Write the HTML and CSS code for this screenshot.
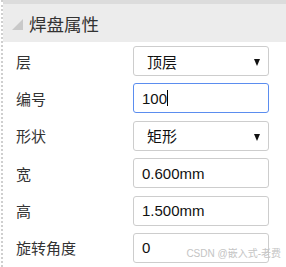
FILE: index.html
```html
<!DOCTYPE html>
<html lang="zh-CN">
<head>
  <meta charset="UTF-8" />
  <meta name="viewport" content="width=device-width, initial-scale=1.0" />
  <title>焊盘属性</title>
  <link rel="stylesheet" href="styles.css">
</head>
<body>
  <div class="panel">
    <div class="topbar"></div>
    <div class="header">
      <svg class="collapse" width="11" height="11" viewBox="0 0 11 11">
        <polygon points="0,11 11,11 11,0" fill="#c9c9c9" />
      </svg>
      <span class="title">焊盘属性</span>
    </div>

    <div class="props">
      <div class="row">
        <span class="label">层</span>
        <div class="field select">顶层<span class="arrow"></span></div>
      </div>
      <div class="row">
        <span class="label">编号</span>
        <div class="field focused">100<span class="caret"></span></div>
      </div>
      <div class="row">
        <span class="label">形状</span>
        <div class="field select">矩形<span class="arrow"></span></div>
      </div>
      <div class="row">
        <span class="label">宽</span>
        <div class="field">0.600mm</div>
      </div>
      <div class="row">
        <span class="label">高</span>
        <div class="field">1.500mm</div>
      </div>
      <div class="row">
        <span class="label">旋转角度</span>
        <div class="field">0</div>
      </div>
    </div>

    <div class="watermark">CSDN @嵌入式-老费</div>
  </div>
</body>
</html>
```

FILE: styles.css
```css
* {
  margin: 0;
  padding: 0;
  box-sizing: border-box;
}

body {
  font-family: "Liberation Sans", "Noto Sans CJK SC", sans-serif;
  background: #fff;
  color: #222;
}

.panel {
  position: relative;
  min-height: 100vh;
  margin-left: 1px;
  border-left: 2px dotted #cfcfcf;
}

.topbar {
  height: 4px;
  background: #dcdcdc;
}

.header {
  height: 38px;
  background: #ececec;
  display: flex;
  align-items: center;
  gap: 6px;
  padding-left: 9px;
}

.collapse {
  margin-top: 2px;
}

.title {
  font-size: 17.5px;
  color: #333;
}

.props {
  display: flex;
  flex-direction: column;
  gap: 7.4px;
  padding-top: 4px;
}

.row {
  display: flex;
  align-items: center;
  height: 30px;
}

.label {
  width: 130px;
  padding-left: 13px;
  font-size: 15px;
  color: #333;
}

.field {
  position: relative;
  width: 136px;
  height: 30px;
  border: 1px solid #cdcdcd;
  border-radius: 3px;
  padding-left: 8px;
  display: flex;
  align-items: center;
  font-size: 15px;
  color: #111;
}

.field.select {
  padding-left: 13px;
}

.field.focused {
  border-color: #5b8def;
}

.arrow {
  position: absolute;
  right: 8px;
  top: 12px;
  border-left: 3.5px solid transparent;
  border-right: 3.5px solid transparent;
  border-top: 7px solid #111;
}

.caret {
  display: inline-block;
  width: 1px;
  height: 16px;
  background: #000;
}

.watermark {
  position: absolute;
  right: 5px;
  bottom: 7px;
  font-size: 10px;
  color: #c4c4c4;
}
```
